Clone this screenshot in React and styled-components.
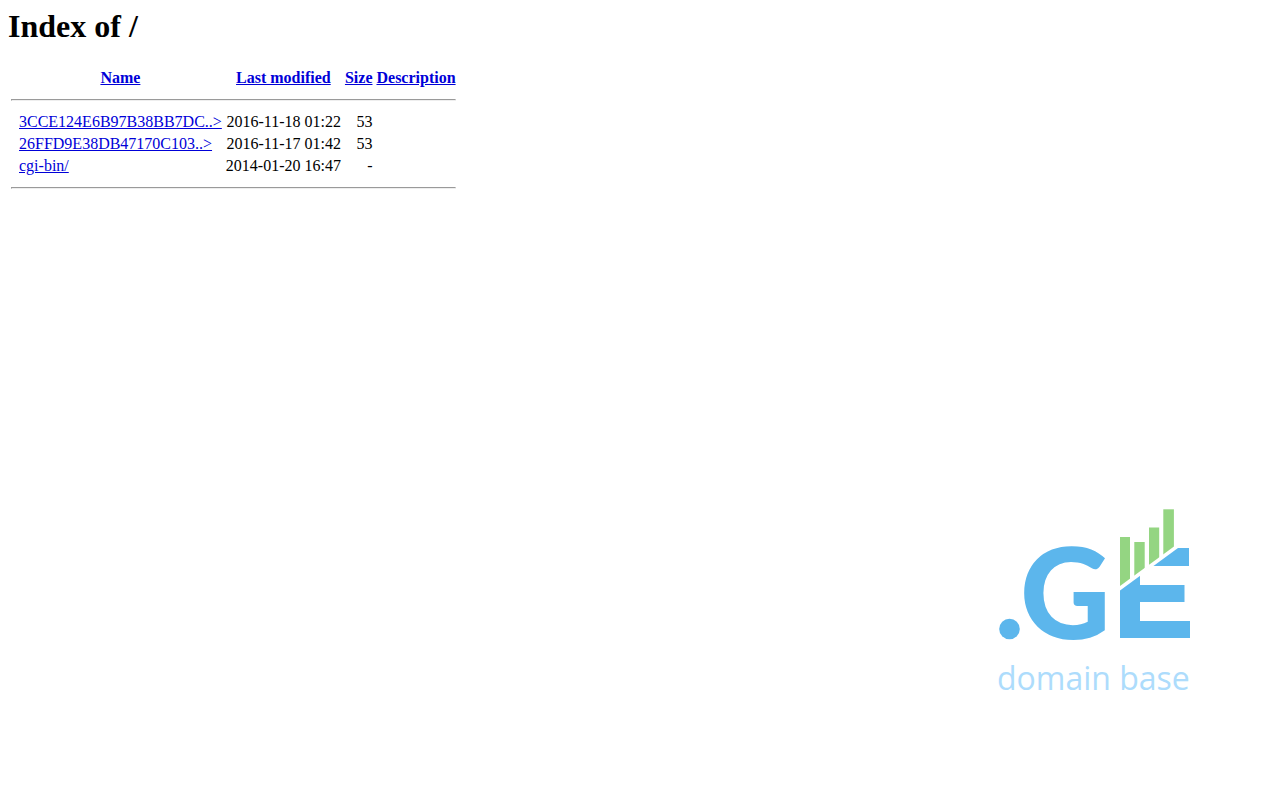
import React from 'react';
import styled, { createGlobalStyle } from 'styled-components';

const GlobalStyle = createGlobalStyle`
  body {
    margin: 0;
    background: #fff;
    color: #000;
    font-family: "Liberation Serif", "Times New Roman", serif;
    font-size: 16px;
  }
`;

const Page = styled.main`
  box-sizing: border-box;
  min-height: 100vh;
  padding: 8px;
  display: flex;
  flex-direction: column;
  align-items: flex-start;
`;

const Title = styled.h1`
  margin: 0 0 21px;
  font-size: 32px;
  line-height: 37px;
`;

const Listing = styled.table`
  border-spacing: 2px;
  line-height: 18px;

  th,
  td {
    padding: 1px;
  }
`;

const Cell = styled.td`
  text-align: ${(props) => props.$align || 'left'};
  white-space: pre;
`;

const Rule = styled.hr`
  margin: 8px 0;
`;

const Link = styled.a`
  color: #0000d8;
  text-decoration: underline;
`;

const Logo = styled.svg`
  display: block;
  width: 210px;
  height: 200px;
  margin: auto 72px 92px auto;
`;

const columns = ['Name', 'Last modified', 'Size', 'Description'];

const files = [
  { name: '3CCE124E6B97B38BB7DC..>', modified: '2016-11-18 01:22', size: '53' },
  { name: '26FFD9E38DB47170C103..>', modified: '2016-11-17 01:42', size: '53' },
  { name: 'cgi-bin/', modified: '2014-01-20 16:47', size: '-' },
];

// Full width separator row
const RuleRow = () => (
  <tr>
    <th colSpan={5}>
      <Rule />
    </th>
  </tr>
);

const DomainLogo = () => (
  <Logo viewBox="0 0 210 200" role="img" aria-label=".GE domain base">
    <defs>
      {/* Everything below the diagonal cut */}
      <clipPath id="below">
        <path d="M130 90.5L188 48H210V150H130Z" />
      </clipPath>
      {/* Everything above the diagonal cut */}
      <clipPath id="above">
        <path d="M130 0H184V46.5L130 86Z" />
      </clipPath>
    </defs>
    <circle cx="19.5" cy="129" r="10.3" fill="#5cb6ec" />
    <text x="30" y="139" fill="#5cb6ec" fontFamily="Lato, sans-serif" fontWeight="900" fontSize="125">G</text>
    <g fill="#5cb6ec" clipPath="url(#below)">
      <rect x="130" y="48" width="20" height="90" />
      <rect x="150" y="48" width="49" height="18" />
      <rect x="150" y="85" width="44.5" height="17" />
      <rect x="150" y="121" width="50" height="17" />
    </g>
    {/* Chart bars */}
    <g fill="#94d582" clipPath="url(#above)">
      <rect x="130" y="37" width="10" height="60" />
      <rect x="144.3" y="42" width="10.4" height="60" />
      <rect x="159" y="27.5" width="10.2" height="60" />
      <rect x="173.3" y="9.3" width="10.6" height="60" />
    </g>
    <text x="7" y="190" fill="#addcfc" fontFamily="Open Sans, sans-serif" fontSize="32">domain base</text>
  </Logo>
);

const App = () => (
  <>
    <GlobalStyle />
    <Page>
      <Title>Index of /</Title>
      <Listing>
        <thead>
          <tr>
            <th>&nbsp;</th>
            {columns.map((column) => (
              <th key={column}>
                <Link href="#">{column}</Link>
              </th>
            ))}
          </tr>
          <RuleRow />
        </thead>
        <tbody>
          {files.map((file) => (
            <tr key={file.name}>
              <Cell>&nbsp;</Cell>
              <Cell>
                <Link href="#">{file.name}</Link>
              </Cell>
              <Cell $align="right">{file.modified}</Cell>
              <Cell $align="right">{file.size}</Cell>
              <Cell>&nbsp;</Cell>
            </tr>
          ))}
          <RuleRow />
        </tbody>
      </Listing>
      <DomainLogo />
    </Page>
  </>
);

export default App;
